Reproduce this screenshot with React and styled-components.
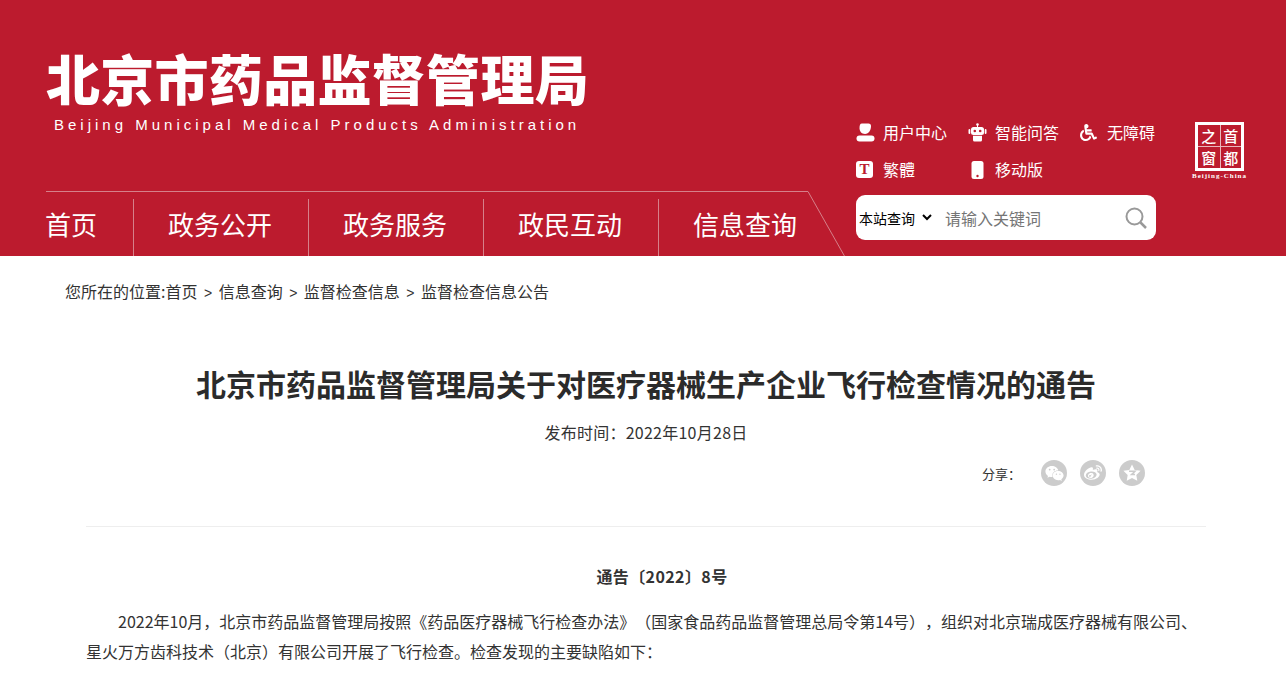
import React from 'react';
import styled, { createGlobalStyle } from 'styled-components';
import { FaWeixin, FaWeibo, FaWheelchair } from 'react-icons/fa';

const CJK = '"Noto Sans CJK SC", "Liberation Sans", sans-serif';

const Global = createGlobalStyle`
  html, body {
    margin: 0;
    padding: 0;
    background: #fff;
    overflow: hidden;
  }
  body {
    font-family: ${CJK};
    color: #333;
    text-spacing-trim: space-all;
  }
`;

//Header

const Header = styled.header`
  height: 256px;
  background: #bc1b2e;
  display: flex;
  color: #fff;
  overflow: hidden;
`;

const Brand = styled.div`
  width: 762px;
  margin-left: 46px;
  display: flex;
  flex-direction: column;
`;

const SiteName = styled.h1`
  margin: 39px 0 0;
  font-size: 54px;
  line-height: 78px;
  font-weight: 900;
  letter-spacing: 0.3px;
  white-space: nowrap;
`;

const SiteNameEn = styled.div`
  margin: -1px 0 0 8px;
  font-family: "Liberation Sans", sans-serif;
  font-size: 15px;
  line-height: 18px;
  letter-spacing: 4px;
  white-space: nowrap;
`;

const Nav = styled.nav`
  position: relative;
  margin-top: 57px;
  height: 64px;
  border-top: 1px solid #d6808a;
  display: flex;
  padding-top: 7px;
`;

const Slant = styled.svg`
  position: absolute;
  left: 100%;
  top: -1px;
`;

const NavItem = styled.a`
  height: 57px;
  box-sizing: border-box;
  padding: 0 36px 0 34px;
  font-size: 26px;
  line-height: 50px;
  white-space: nowrap;
  border-left: 1px solid #d6808a;
  &:first-of-type {
    margin-left: -1px;
    padding-left: 0;
    border-left: none;
  }
`;

const Side = styled.div`
  width: 300px;
  margin-left: 48px;
  padding-top: 113px;
`;

const Tools = styled.div`
  display: grid;
  grid-template-columns: 112px 112px auto;
  grid-auto-rows: 37px;
  height: 82px;
`;

const Tool = styled.a`
  display: flex;
  align-items: center;
  height: 37px;
  font-size: 16px;
  white-space: nowrap;
`;

const ToolIcon = styled.span`
  width: ${(props) => (props.inset ? 24 : 27)}px;
  margin-left: ${(props) => (props.inset ? 3 : 0)}px;
  margin-top: 2px;
  flex: none;
  display: flex;
  align-items: center;
  svg {
    display: block;
  }
`;

const TradBox = styled.span`
  width: 17px;
  height: 17px;
  border-radius: 3px;
  background: #fff;
  color: #bc1b2e;
  font: bold 15px/17px "Liberation Serif", serif;
  text-align: center;
`;

const Search = styled.div`
  height: 45px;
  background: #fff;
  border-radius: 9px;
  display: flex;
  align-items: center;
  padding: 0 9px 0 3px;
`;

const Scope = styled.span`
  display: flex;
  align-items: center;
  gap: 7px;
  width: 86px;
  flex: none;
  font-size: 14px;
  color: #000;
  white-space: nowrap;
`;

const SearchInput = styled.input`
  flex: 1;
  min-width: 0;
  border: none;
  outline: none;
  background: none;
  padding: 0;
  font-family: ${CJK};
  font-size: 16px;
  &::placeholder {
    color: #757575;
    opacity: 1;
  }
`;

const Emblem = styled.div`
  margin: 122px 0 0 39px;
  width: 56px;
  flex: none;
`;

const Seal = styled.div`
  width: 49px;
  height: 49px;
  box-sizing: border-box;
  border: 3px solid #fff;
  display: grid;
  grid-template-columns: 1fr 1fr;
  grid-template-rows: 1fr 1fr;
`;

const SealChar = styled.span`
  font-size: 15px;
  line-height: 21px;
  font-weight: 500;
  text-align: center;
  ${(props) => props.right && 'border-left: 1px solid #e9b5bb;'}
  ${(props) => props.bottom && 'border-top: 1px solid #e9b5bb;'}
`;

const SealText = styled.div`
  margin: 0 0 0 -3px;
  font: bold 7px/10px "Liberation Serif", serif;
  white-space: nowrap;
  letter-spacing: 1px;
`;

//Article

const Crumbs = styled.div`
  padding: 24px 0 0 65px;
  font-size: 16px;
  line-height: 22px;
  color: #333;
  white-space: nowrap;
`;

const Sep = styled.span`
  margin: 0 6.5px;
  font-family: "Liberation Sans", sans-serif;
  font-size: 14px;
`;

const Article = styled.main`
  width: 1120px;
  margin-left: 86px;
`;

const Title = styled.h2`
  margin: 56px 0 0;
  font-size: 30px;
  line-height: 46px;
  font-weight: 700;
  color: #2b2b2b;
  text-align: center;
  white-space: nowrap;
`;

const PubDate = styled.div`
  margin-top: 14px;
  font-size: 16px;
  line-height: 24px;
  letter-spacing: 0.25px;
  text-align: center;
`;

const ShareRow = styled.div`
  margin-top: 16px;
  height: 26px;
  padding-right: 61px;
  display: flex;
  justify-content: flex-end;
  align-items: center;
  gap: 13px;
`;

const ShareLabel = styled.span`
  font-size: 13px;
  margin-right: 7px;
`;

const ShareIcon = styled.span`
  width: 26px;
  height: 26px;
  border-radius: 50%;
  background: #ccc;
  color: #fff;
  display: flex;
  align-items: center;
  justify-content: center;
`;

const Body = styled.div`
  margin-top: 40px;
  border-top: 1px solid #eee;
  padding-top: 34px;
`;

const DocNo = styled.div`
  font-size: 16px;
  font-weight: 700;
  line-height: 30px;
  letter-spacing: 0.4px;
  text-align: center;
  text-indent: 2em;
`;

const Paragraph = styled.p`
  margin: 15px 0 0;
  font-size: 16px;
  line-height: 30px;
  text-indent: 2em;
  color: #333;
`;

const UserIcon = () => (
  <svg width="19" height="19" viewBox="0 0 19 19" fill="#fff">
    <path d="M6 0.5h6.5c1.6 0 2.5 1 2.5 2.5 0 4-2.2 8-6 8-3.6 0-5.5-3-5.5-6C3.500 2.500 4 0.500 6 0.500z" />
    <rect x="0.500" y="12.500" width="18" height="6" rx="3" />
  </svg>
);

const RobotIcon = () => (
  <svg width="19" height="19" viewBox="0 0 19 19" fill="#fff">
    <circle cx="9.500" cy="1.500" r="1.300" />
    <rect x="9" y="2" width="1" height="2" />
    <rect x="3" y="4" width="13" height="8" rx="2.500" />
    <rect x="0.500" y="6" width="1.800" height="5" rx="0.900" />
    <rect x="16.700" y="6" width="1.800" height="5" rx="0.900" />
    <path d="M5 12.800h9v4.200a1.500 1.500 0 0 1-1.500 1.500h-6A1.500 1.500 0 0 1 5 17z" />
    <circle cx="6.800" cy="8" r="1.300" fill="#bc1b2e" />
    <circle cx="12.200" cy="8" r="1.300" fill="#bc1b2e" />
  </svg>
);

const PhoneIcon = () => (
  <svg width="13" height="18" viewBox="0 0 13 18" fill="#fff">
    <rect x="0.500" y="0" width="12" height="18" rx="2.500" />
    <circle cx="6.500" cy="15" r="1.200" fill="#bc1b2e" />
  </svg>
);

const QzoneIcon = () => (
  <svg width="18" height="18" viewBox="0 0 18 18" fill="#fff">
    <path d="M9 0.500l2.700 5.400 5.900 0.900-4.300 4.100 1 5.900L9 14l-5.300 2.800 1-5.900L0.400 6.800l5.900-0.900z" />
    <path d="M6 7.200h6L8.500 10.600h3.500" fill="none" stroke="#ccc" strokeWidth="1.500" />
  </svg>
);

const navItems = ['首页', '政务公开', '政务服务', '政民互动', '信息查询'];

function App() {
  return (
    <>
      <Global />
      <Header>
        <Brand>
          <SiteName>北京市药品监督管理局</SiteName>
          <SiteNameEn>Beijing Municipal Medical Products Administration</SiteNameEn>
          <Nav>
            {navItems.map((item) => <NavItem key={item}>{item}</NavItem>)}
            <Slant width="38" height="66" viewBox="0 0 38 66">
              <line x1="0" y1="0.500" x2="37" y2="66" stroke="#d6808a" />
            </Slant>
          </Nav>
        </Brand>
        <Side>
          <Tools>
            <Tool><ToolIcon><UserIcon /></ToolIcon>用户中心</Tool>
            <Tool><ToolIcon><RobotIcon /></ToolIcon>智能问答</Tool>
            <Tool><ToolIcon><FaWheelchair size={17} /></ToolIcon>无障碍</Tool>
            <Tool><ToolIcon><TradBox>T</TradBox></ToolIcon>繁體</Tool>
            <Tool><ToolIcon inset><PhoneIcon /></ToolIcon>移动版</Tool>
          </Tools>
          <Search>
            <Scope>
              本站查询
              <svg width="10" height="7" viewBox="0 0 10 7">
                <path d="M1 1l4 4 4-4" fill="none" stroke="#000" strokeWidth="2" />
              </svg>
            </Scope>
            <SearchInput placeholder="请输入关键词" />
            <svg width="22" height="22" viewBox="0 0 22 22" fill="none" stroke="#999" strokeWidth="2">
              <circle cx="9.500" cy="9.500" r="8" />
              <path d="M15.500 15.500l5.500 5.500" strokeWidth="2.500" />
            </svg>
          </Search>
        </Side>
        <Emblem>
          <Seal>
            <SealChar>之</SealChar>
            <SealChar right>首</SealChar>
            <SealChar bottom>窗</SealChar>
            <SealChar right bottom>都</SealChar>
          </Seal>
          <SealText>Beijing-China</SealText>
        </Emblem>
      </Header>
      <Crumbs>
        您所在的位置:首页<Sep>&gt;</Sep>信息查询<Sep>&gt;</Sep>监督检查信息<Sep>&gt;</Sep>监督检查信息公告
      </Crumbs>
      <Article>
        <Title>北京市药品监督管理局关于对医疗器械生产企业飞行检查情况的通告</Title>
        <PubDate>发布时间：2022年10月28日</PubDate>
        <ShareRow>
          <ShareLabel>分享：</ShareLabel>
          <ShareIcon><FaWeixin size={19} /></ShareIcon>
          <ShareIcon><FaWeibo size={18} /></ShareIcon>
          <ShareIcon><QzoneIcon /></ShareIcon>
        </ShareRow>
        <Body>
          <DocNo>通告〔2022〕8号</DocNo>
          <Paragraph>
            2022年10月，北京市药品监督管理局按照《药品医疗器械飞行检查办法》（国家食品药品监督管理总局令第14号），组织对北京瑞成医疗器械有限公司、星火万方齿科技术（北京）有限公司开展了飞行检查。检查发现的主要缺陷如下：
          </Paragraph>
        </Body>
      </Article>
    </>
  );
}

export default App;
